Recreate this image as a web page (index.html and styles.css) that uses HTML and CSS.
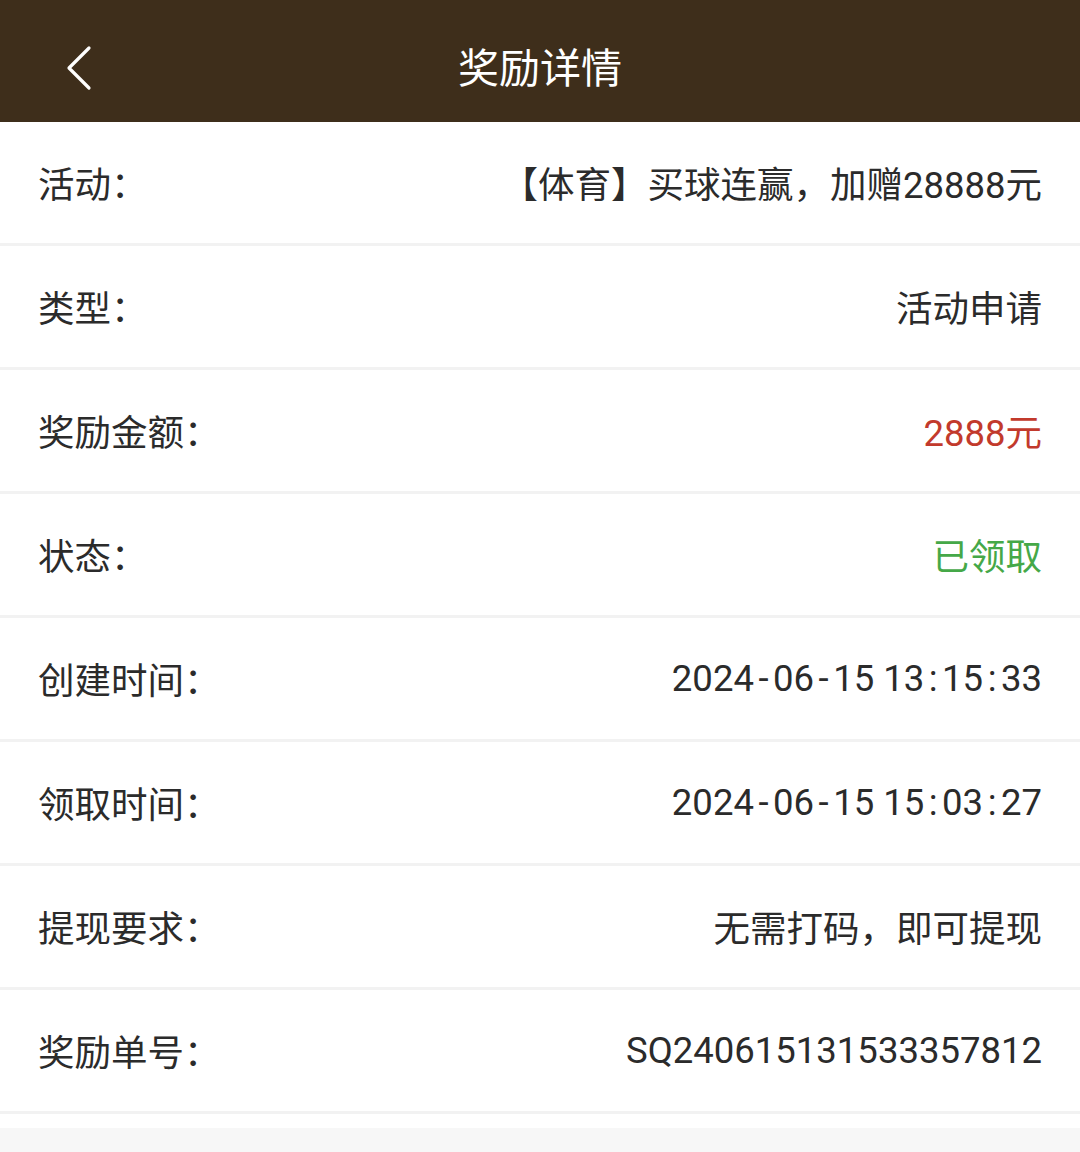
FILE: index.html
```html
<!DOCTYPE html>
<html lang="zh-CN">
<head>
	<meta charset="UTF-8">
	<title>奖励详情</title>
	<link rel="stylesheet" href="styles.css">
</head>
<body>
	<div class="header">
		<a href="javascript:;" class="back">
			<svg width="30" height="46" viewBox="0 0 30 46"><path d="M25 3 L5 23 L25 43" fill="none" stroke="#fff" stroke-width="3.2" stroke-linecap="round" stroke-linejoin="round"/></svg>
		</a>
		<h1>奖励详情</h1>
	</div>
	<ul class="detail">
		<li><span class="label">活动：</span><span class="val">【体育】买球连赢，加赠28888元</span></li>
		<li><span class="label">类型：</span><span class="val">活动申请</span></li>
		<li><span class="label">奖励金额：</span><span class="val red">2888元</span></li>
		<li><span class="label">状态：</span><span class="val green">已领取</span></li>
		<li><span class="label">创建时间：</span><span class="val">2024<i>-</i>06<i>-</i>15 13<i>:</i>15<i>:</i>33</span></li>
		<li><span class="label">领取时间：</span><span class="val">2024<i>-</i>06<i>-</i>15 15<i>:</i>03<i>:</i>27</span></li>
		<li><span class="label">提现要求：</span><span class="val">无需打码，即可提现</span></li>
		<li><span class="label">奖励单号：</span><span class="val">SQ240615131533357812</span></li>
	</ul>
	<div class="rest"></div>
</body>
</html>
```

FILE: styles.css
```css
*{margin:0;padding:0;}
body{
	background: #fff;
	font-family: Roboto, "Noto Sans CJK SC", sans-serif;
	color: #2b2b2b;
}
.header{
	height: 122px;
	background: #3e2e1b;
	display: flex;
	align-items: center;
	justify-content: center;
	position: relative;
}
.header h1{
	color: #fff;
	font-size: 41px;
	font-weight: normal;
	padding-top: 8px;
}
.back{
	position: absolute;
	left: 64px;
	top: 45px;
	display: block;
	line-height: 0;
}
.detail{
	list-style: none;
	padding-bottom: 14px;
}
.detail li{
	height: 121px;
	border-bottom: 3px solid #f2f2f2;
	display: flex;
	align-items: center;
	justify-content: space-between;
	padding: 0 38px;
	font-size: 36.5px;
}
.val{
	text-align: right;
}
.val i{
	font-style: normal;
	padding: 0 4.5px;
}
.red{color: #c23a2c;}
.green{color: #45a848;}
.rest{
	background: #f7f7f7;
	height: 24px;
}
```
